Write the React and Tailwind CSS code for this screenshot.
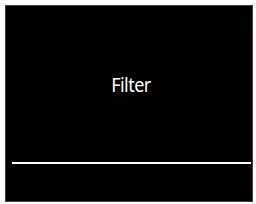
export default function App() {
  return (
    <div className="w-[256px] h-[204px] bg-white pt-[5px] pl-[5px]">
      <div className="w-[248px] h-[197px] bg-black border border-[#4a3a36] flex flex-col">
        <div className="h-[156px] flex items-center justify-center pt-[2px] pl-[3px]">
          <span className="text-white text-[20px] leading-none font-['Noto_Sans',sans-serif] tracking-[-0.03em] [transform:scaleX(0.9)]">Filter</span>
        </div>
        <div className="h-[2px] bg-white ml-[6px] mr-[1px]" />
      </div>
    </div>
  );
}
